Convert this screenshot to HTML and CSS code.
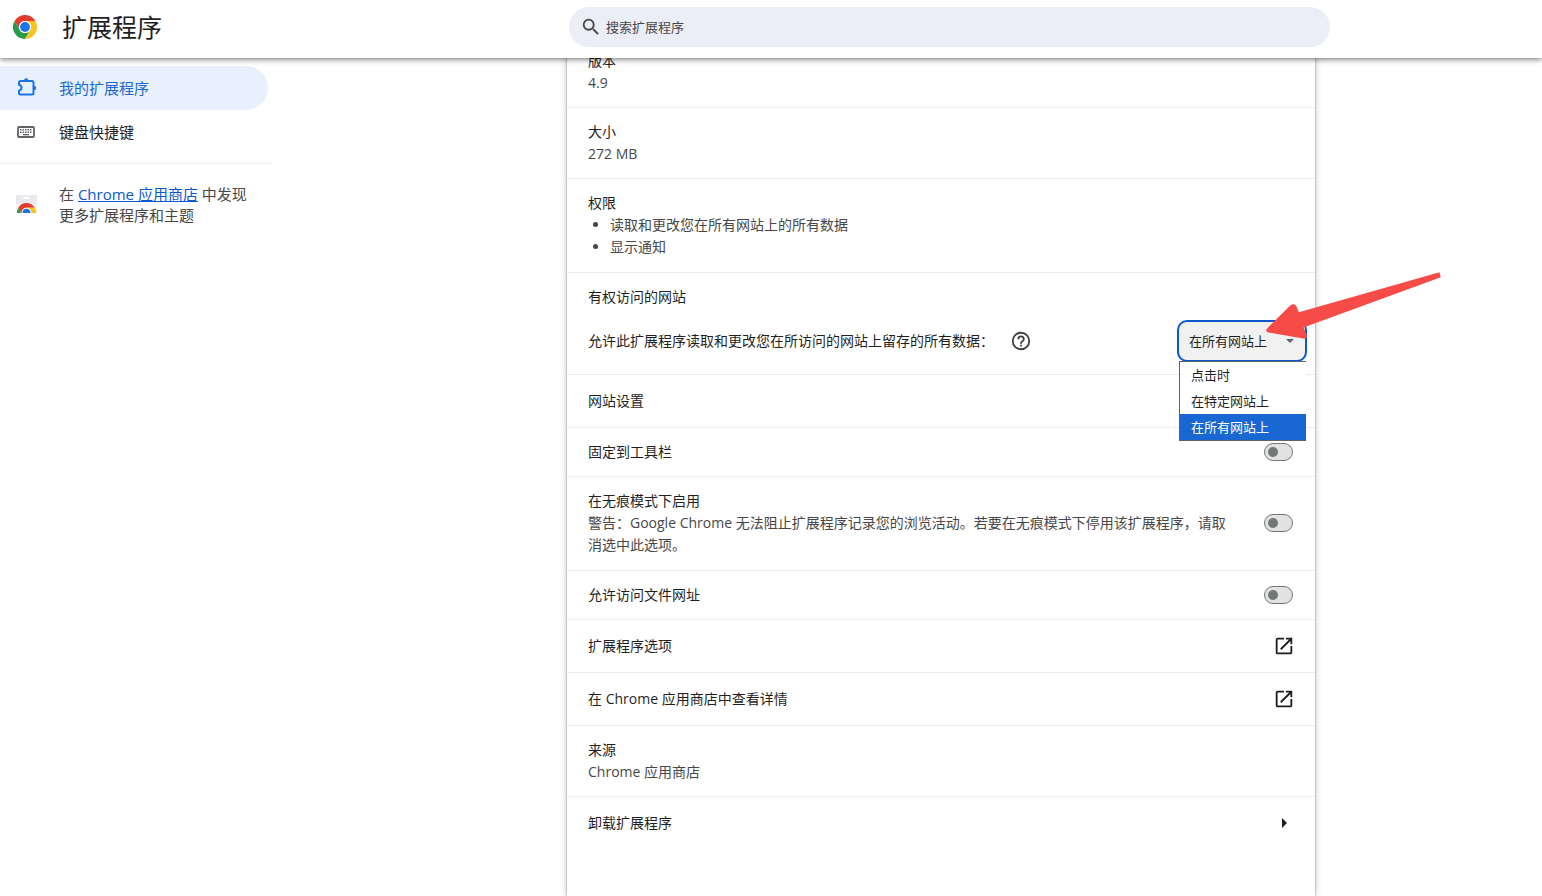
FILE: index.html
```html
<!DOCTYPE html>
<html lang="zh-CN">
<head>
<meta charset="utf-8">
<title>扩展程序</title>
<link rel="stylesheet" href="styles.css">
</head>
<body>
<svg class="defs" width="0" height="0" aria-hidden="true">
  <defs>
    <symbol id="chrome" viewBox="0 0 48 48">
      <path fill="#e33b2e" d="M3.200 12A24 24 0 0 1 44.800 12H24A12 12 0 0 0 13.600 30z"/>
      <path fill="#2a9b48" d="M3.200 12L13.600 30A12 12 0 0 0 34.400 30L24 48A24 24 0 0 1 3.200 12z"/>
      <path fill="#fcc31e" d="M44.800 12A24 24 0 0 1 24 48L34.400 30A12 12 0 0 0 24 12z"/>
      <circle cx="24" cy="24" r="12" fill="#fff"/>
      <circle cx="24" cy="24" r="9.800" fill="#1a73e8"/>
    </symbol>
    <symbol id="launch" viewBox="0 0 24 24">
      <path fill="currentColor" d="M19 19H5V5h7V3H5a2 2 0 0 0-2 2v14a2 2 0 0 0 2 2h14c1.100 0 2-.9 2-2v-7h-2v7zM14 3v2h3.590l-9.830 9.830 1.410 1.410L19 6.410V10h2V3h-7z"/>
    </symbol>
    <symbol id="arrow" viewBox="0 0 22 22">
      <path fill="currentColor" d="M9 6l5 5-5 5z"/>
    </symbol>
  </defs>
</svg>

<header class="toolbar">
  <div class="brand">
    <svg class="logo"><use href="#chrome"/></svg>
    <h1 class="title">扩展程序</h1>
  </div>
  <label class="search">
    <svg class="search-icon" viewBox="0 0 24 24"><path fill="currentColor" d="M15.500 14h-.79l-.28-.27A6.470 6.470 0 0 0 16 9.500 6.500 6.500 0 1 0 9.500 16c1.610 0 3.090-.59 4.230-1.570l.27.28v.79l5 4.990L20.490 19l-4.990-5zm-6 0C7.010 14 5 11.990 5 9.500S7.010 5 9.500 5 14 7.010 14 9.500 11.990 14 9.500 14z"/></svg>
    <input class="search-input" type="search" placeholder="搜索扩展程序" aria-label="搜索扩展程序">
  </label>
</header>

<div class="layout">
  <nav class="sidebar">
    <a class="nav-item active" href="#extensions">
      <svg class="nav-icon" viewBox="0 0 22 22"><path fill="none" stroke="currentColor" stroke-width="2" stroke-linejoin="round" d="M5.500 4h11.500a1.500 1.500 0 0 1 1.500 1.500v10.500a1.500 1.500 0 0 1-1.500 1.500H5.500A1.500 1.500 0 0 1 4 16v-2.200c1.600-.4 2.500-1.500 2.500-3S5.600 8.200 4 7.800V5.500A1.500 1.500 0 0 1 5.500 4z"/><path fill="currentColor" d="M9 3.500a2.200 2.200 0 0 1 4.400 0zM19 8.700a2.200 2.200 0 0 1 0 4.400z"/></svg>
      我的扩展程序
    </a>
    <a class="nav-item" href="#shortcuts">
      <svg class="nav-icon muted" viewBox="0 0 22 22"><rect x="3" y="6" width="16" height="10" rx="1" fill="none" stroke="currentColor" stroke-width="1.800"/><path stroke="currentColor" stroke-width="1.500" stroke-dasharray="1.500 1" d="M5 8.800h12M5 11.200h12"/><path stroke="currentColor" stroke-width="1.300" d="M8 13.700h6"/></svg>
      键盘快捷键
    </a>
    <div class="promo">
      <svg class="nav-icon" viewBox="0 0 22 22"><path fill="#e8eaed" d="M1 1h21v9H1z"/><path fill="#f1f3f4" d="M1 10h21v9H1z"/><rect x="8" y="3" width="7" height="2" rx="1" fill="#fff"/><svg x="2" y="9" width="19" height="10" viewBox="0 0 48 25"><use href="#chrome" width="48" height="48"/></svg></svg>
      <p class="promo-text">在 <a class="link" href="#store">Chrome 应用商店</a> 中发现更多扩展程序和主题</p>
    </div>
  </nav>

  <main class="card">
    <section class="row stack">
      <div class="label">版本</div>
      <div class="sub">4.9</div>
    </section>
    <section class="row stack">
      <div class="label">大小</div>
      <div class="sub">272 MB</div>
    </section>
    <section class="row roomy">
      <div class="label">权限</div>
      <ul class="permissions">
        <li>读取和更改您在所有网站上的所有数据</li>
        <li>显示通知</li>
      </ul>
    </section>
    <section class="row access">
      <div class="label">有权访问的网站</div>
      <div class="access-line">
        <label for="host-access">允许此扩展程序读取和更改您在所访问的网站上留存的所有数据：</label>
        <button class="help" type="button" aria-label="帮助">
          <svg viewBox="0 0 24 24"><circle cx="12" cy="12" r="9" fill="none" stroke="currentColor" stroke-width="2"/><path fill="currentColor" d="M11 16h2v2h-2zM12 6a4 4 0 0 0-4 4h2a2 2 0 1 1 4 0c0 2-3 1.750-3 5h2c0-2.250 3-2.500 3-5a4 4 0 0 0-4-4z"/></svg>
        </button>
        <div class="picker">
          <select class="select" id="host-access">
            <option>点击时</option>
            <option>在特定网站上</option>
            <option selected>在所有网站上</option>
          </select>
          <svg class="caret" viewBox="0 0 8 4"><path fill="#5f6368" d="M0 0h8L4 4z"/></svg>
          <ul class="menu" role="listbox" aria-label="网站访问权限">
            <li class="option" role="option">点击时</li>
            <li class="option" role="option">在特定网站上</li>
            <li class="option selected" role="option" aria-selected="true">在所有网站上</li>
          </ul>
          <svg class="pointer" viewBox="0 0 182 70"><path fill="#f74b47" d="M177.500 2.300l1.300 4.900L41.500 57.500l3.300 7.500q1 4-3.500 3.400L6.500 62.500q-4-1.200-1-4.500L28 35.800q4.500-3.300 6.500.8l2.300 5.600z"/></svg>
        </div>
      </div>
    </section>
    <button class="row line tall" type="button">网站设置<svg class="icon"><use href="#arrow"/></svg></button>
    <label class="row line">固定到工具栏<input class="toggle" type="checkbox"></label>
    <label class="row line roomy">
      <span class="text">
        <span class="label">在无痕模式下启用</span>
        <span class="sub">警告：Google Chrome 无法阻止扩展程序记录您的浏览活动。若要在无痕模式下停用该扩展程序，请取消选中此选项。</span>
      </span>
      <input class="toggle" type="checkbox">
    </label>
    <label class="row line">允许访问文件网址<input class="toggle" type="checkbox"></label>
    <button class="row line tall" type="button">扩展程序选项<svg class="icon"><use href="#launch"/></svg></button>
    <button class="row line tall" type="button">在 Chrome 应用商店中查看详情<svg class="icon"><use href="#launch"/></svg></button>
    <section class="row stack">
      <div class="label">来源</div>
      <div class="sub">Chrome 应用商店</div>
    </section>
    <button class="row line tall" type="button">卸载扩展程序<svg class="icon"><use href="#arrow"/></svg></button>
  </main>
</div>
</body>
</html>
```

FILE: styles.css
```css
* {
  box-sizing: border-box;
}

html,
body {
  height: 100%;
}

body {
  margin: 0;
  display: flex;
  flex-direction: column;
  overflow: hidden;
  background: #fff;
  color: #1f1f1f;
  font: 14px/22px "Open Sans", "Noto Sans CJK SC", sans-serif;
}

button,
input,
select {
  font: inherit;
  color: inherit;
}

.defs {
  position: absolute;
}

.toolbar {
  position: sticky;
  top: 0;
  z-index: 2;
  flex: none;
  display: grid;
  grid-template-columns: 569fr 761fr 212fr;
  height: 58px;
  padding: 7px 0 11px;
  background: #fff;
  box-shadow: 0 1px 6px rgba(0, 0, 0, 0.6);
}

.brand {
  display: flex;
  align-items: center;
  gap: 25px;
  padding-left: 13px;
}

.logo {
  width: 24px;
  height: 24px;
}

.title {
  margin: 0;
  font-size: 25px;
  line-height: 32px;
  font-weight: 400;
}

.search {
  display: flex;
  align-items: center;
  gap: 4px;
  padding: 0 20px 0 11px;
  border-radius: 20px;
  background: #ebeef7;
  color: #474747;
}

.search-icon {
  flex: none;
  width: 22px;
  height: 22px;
}

.search-input {
  flex: 1;
  min-width: 0;
  padding: 0;
  border: 0;
  outline: 0;
  background: none;
  font-size: 13px;
}

.search-input::placeholder {
  color: #474747;
  opacity: 1;
}

.layout {
  flex: 1;
  display: grid;
  grid-template-columns: minmax(271px, 567fr) minmax(320px, 748px) minmax(0, 227fr);
}

.sidebar {
  width: 271px;
  padding-top: 8px;
  font-size: 15px;
}

.nav-item {
  display: flex;
  align-items: center;
  gap: 22px;
  height: 44px;
  margin-right: 3px;
  padding-left: 15px;
  border-radius: 0 22px 22px 0;
  color: #1f1f1f;
  text-decoration: none;
}

.active {
  background: #e8f0fe;
  color: #1967d2;
}

.nav-icon {
  flex: none;
  width: 22px;
  height: 22px;
}

.active .nav-icon {
  color: #1a73e8;
}

.muted {
  color: #5f6368;
}

.promo {
  display: flex;
  align-items: center;
  gap: 22px;
  margin-top: 9px;
  padding: 20px 15px;
  border-top: 1px solid #e8eaed;
  color: #474747;
}

.promo-text {
  margin: 0;
  line-height: 21px;
}

.link {
  color: #0b57d0;
}

.card {
  margin-top: -21px;
  background: #fff;
  box-shadow: 0 0 2px rgba(0, 0, 0, 0.45), 0 0 8px rgba(0, 0, 0, 0.2);
}

.row {
  width: 100%;
  padding: 13px 22px 13px 21px;
  border: 0;
  border-bottom: 1px solid #ebebeb;
  background: none;
  text-align: left;
}

.row:last-child {
  border-bottom: 0;
}

.line {
  display: flex;
  align-items: center;
  justify-content: space-between;
}

.tall {
  padding: 15px 20px 15px 21px;
}

.roomy {
  gap: 36px;
  padding-bottom: 14px;
}

.text {
  flex: 1;
}

.text .label,
.text .sub {
  display: block;
}

.sub,
.permissions {
  color: #474747;
}

.permissions {
  margin: 0;
  padding-left: 22px;
}

.access {
  padding: 13px 8px 0 21px;
}

.access-line {
  display: flex;
  align-items: center;
  padding: 12px 0;
}

.help {
  display: flex;
  margin-left: 16px;
  padding: 0;
  border: 0;
  background: none;
  color: #3c4043;
}

.help svg,
.icon {
  width: 22px;
  height: 22px;
}

.picker {
  position: relative;
  width: 130px;
  margin-left: auto;
}

.select {
  display: block;
  width: 100%;
  height: 42px;
  padding: 0 10px;
  border: 2px solid #0b57d0;
  border-radius: 10px;
  outline: 0;
  appearance: none;
  background: #f1f1f1;
  font-size: 13px;
}

.caret {
  position: absolute;
  top: 19px;
  right: 13px;
  width: 8px;
  height: 4px;
}

.menu {
  position: absolute;
  top: 41px;
  left: 2px;
  right: 1px;
  margin: 0;
  padding: 0;
  border: 1px solid #5f6368;
  border-right: 0;
  background: #fff;
  list-style: none;
}

.option {
  padding: 2px 11px;
  font-size: 13px;
}

.selected {
  background: #1967d2;
  color: #fff;
}

.pointer {
  position: absolute;
  top: -50px;
  left: 85px;
  width: 182px;
  height: 70px;
}

.toggle {
  flex: none;
  display: flex;
  align-items: center;
  width: 29px;
  height: 18px;
  margin: 0;
  padding-left: 3px;
  border: 1px solid #747775;
  border-radius: 9px;
  appearance: none;
  background: #e1e3e1;
}

.toggle::before {
  content: "";
  width: 10px;
  height: 10px;
  border-radius: 50%;
  background: #747775;
}
```
